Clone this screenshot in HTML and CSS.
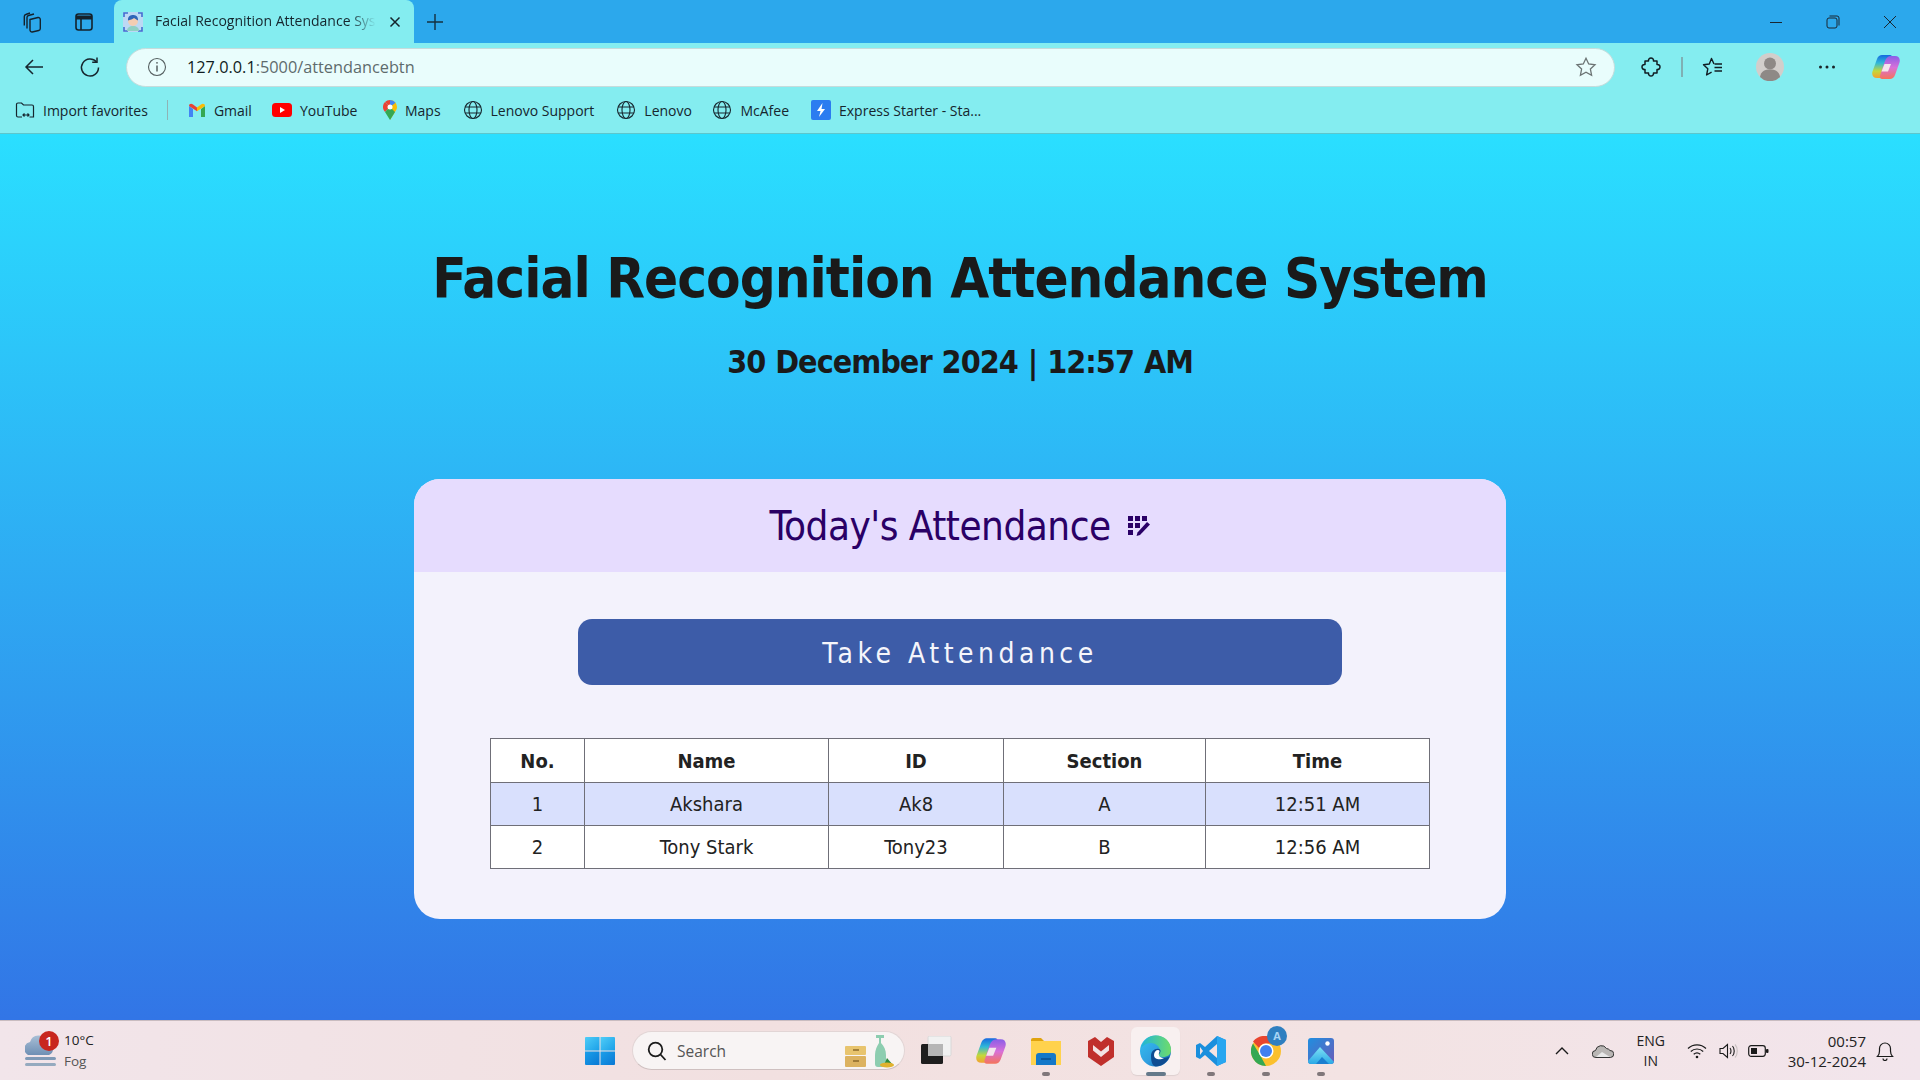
FILE: index.html
```html
<!DOCTYPE html>
<html lang="en">
<head>
<meta charset="utf-8">
<title>Facial Recognition Attendance System</title>
<link rel="stylesheet" href="styles.css">
</head>
<body>
<div class="browser">
  <header class="tabbar">
    <div class="tb-left">
      <span class="tb-btn"><svg width="24" height="24" viewBox="0 0 24 24" fill="none" stroke="#14222c" stroke-width="1.400"><path d="M10 9.500l8-2a2 2 0 0 1 2.300 2v9a2 2 0 0 1-1.600 2l-6.500 1.500a2 2 0 0 1-2.200-2z"/><path d="M7 18.500V7.500a2 2 0 0 1 1.500-2L14 4"/><path d="M4.300 15.500V6.500a2 2 0 0 1 1.500-2L10 3"/></svg></span>
      <span class="tb-btn"><svg width="22" height="22" viewBox="0 0 22 22" fill="none" stroke="#14222c" stroke-width="1.600"><rect x="3" y="3" width="16" height="16" rx="2.500"/><path d="M3 6.500h16" stroke-width="4"/><path d="M8 8v11"/></svg></span>
    </div>
    <div class="tab">
      <svg class="favicon" width="20" height="20" viewBox="0 0 20 20"><rect width="20" height="20" fill="#bcd8f4"/><path d="M1 5V1h4M15 1h4v4M1 15v4h4M19 15v4h-4" fill="none" stroke="#3f6fd0" stroke-width="1.600"/><circle cx="10" cy="9" r="5" fill="#f3cdb2"/><path d="M5 8.500C4.500 4 8 3 10 3s5.500 1 5 5.500C13 7.500 12 6.500 11 6 10 7 7 8 5 8.500z" fill="#2f66b8"/><path d="M4 19c0-3.500 2.500-5 6-5s6 1.500 6 5z" fill="#8fd0c4"/></svg>
      <span class="tab-title">Facial Recognition Attendance Sys</span>
      <svg class="tab-close" width="14" height="14" viewBox="0 0 14 14" stroke="#15252c" stroke-width="1.500"><path d="M2.500 2.500l9 9M11.500 2.500l-9 9"/></svg>
    </div>
    <svg class="tab-new" width="20" height="20" viewBox="0 0 20 20" stroke="#14303f" stroke-width="1.400"><path d="M10 2v16M2 10h16"/></svg>
    <div class="win-controls">
      <svg width="14" height="14" viewBox="0 0 14 14" stroke="#1a2630" stroke-width="1"><path d="M1 7.500h12"/></svg>
      <svg width="14" height="14" viewBox="0 0 14 14" fill="none" stroke="#1a2630" stroke-width="1"><rect x="1" y="3" width="10" height="10" rx="2"/><path d="M3.500 1H11a2 2 0 0 1 2 2v7.500"/></svg>
      <svg width="14" height="14" viewBox="0 0 14 14" stroke="#1a2630" stroke-width="1"><path d="M1 1l12 12M13 1 1 13"/></svg>
    </div>
  </header>

  <div class="toolbar">
    <span class="nav-btn nav-back"><svg width="22" height="22" viewBox="0 0 22 22" fill="none" stroke="#16262e" stroke-width="1.500"><path d="M20 11H3M10 4l-7 7 7 7"/></svg></span>
    <span class="nav-btn nav-reload"><svg width="22" height="22" viewBox="0 0 22 22" fill="none" stroke="#16262e" stroke-width="1.500"><path d="M17.500 6A8.500 8.500 0 1 0 19.500 11.500"/><path d="M18 1.500v4.800h-4.800"/></svg></span>
    <div class="address">
      <svg width="20" height="20" viewBox="0 0 20 20" fill="none" stroke="#555f60" stroke-width="1.100"><circle cx="10" cy="10" r="8.500"/><path d="M10 8.500v6" stroke-width="1.500"/><circle cx="10" cy="5.800" r=".9" fill="#555f60" stroke="none"/></svg>
      <span class="url"><span class="url-host">127.0.0.1</span>:5000/attendancebtn</span>
      <svg class="addr-star" width="22" height="22" viewBox="0 0 22 22" fill="none" stroke="#6c7474" stroke-width="1.300"><path d="M11 2.200l2.700 5.800 6.300.8-4.600 4.300 1.200 6.200L11 16.200l-5.600 3.100 1.200-6.200L2 8.800l6.300-.8z"/></svg>
    </div>
    <div class="tools">
      <svg width="22" height="22" viewBox="0 0 22 22" fill="none" stroke="#101c22" stroke-width="1.500" stroke-linejoin="round"><path d="M8.500 5c-.5-4 5.500-4 5 0h3.500v3.500c4-.5 4 5.500 0 5V17h-3.500c.5 4-5.500 4-5 0H5v-3.500c-4 .5-4-5.500 0-5V5z"/></svg>
      <span class="tool-sep"></span>
      <svg width="22" height="22" viewBox="0 0 22 22" fill="none" stroke="#101c22" stroke-width="1.400" stroke-linejoin="round"><path d="M12 8 9.500 2.500 7.300 8 1.500 8.700l4.300 4.100L4.600 19l5-2.800"/><path d="M12.500 8H20M12.500 11.500H20M12.500 15H20"/></svg>
      <span class="avatar"><svg width="28" height="28" viewBox="0 0 28 28"><circle cx="14" cy="14" r="14" fill="#d2cecb"/><circle cx="14" cy="10.500" r="6" fill="#8e8986"/><path d="M4 24c1-6 5-7.500 10-7.500S23 18 24 24a14 14 0 0 1-20 0z" fill="#8e8986"/></svg></span>
      <svg class="dots" width="18" height="6" viewBox="0 0 18 6" fill="#1a2428"><circle cx="2.500" cy="3" r="1.500"/><circle cx="9" cy="3" r="1.500"/><circle cx="15.500" cy="3" r="1.500"/></svg>
      <svg width="28" height="28" viewBox="0 0 28 28"><defs><linearGradient id="c1" x1="0" y1="0" x2="0" y2="1"><stop offset="0" stop-color="#1668e0"/><stop offset=".35" stop-color="#2fb8d8"/><stop offset=".7" stop-color="#c4d83a"/><stop offset="1" stop-color="#f4a030"/></linearGradient><linearGradient id="c2" x1="0" y1="0" x2="0" y2="1"><stop offset="0" stop-color="#8a5ee8"/><stop offset=".5" stop-color="#d870d8"/><stop offset="1" stop-color="#f5745a"/></linearGradient></defs><path d="M10 2h8c2 0 2.500 2 2 3.500L15 20c-1 3-3 5-6 5H5c-4 0-5.500-3-4.500-6.500L5 6c.8-2.500 3-4 5-4z" fill="url(#c1)"/><path d="M18 26h-8c-2 0-2.500-2-2-3.500L13 8c1-3 3-5 6-5h4c4 0 5.500 3 4.500 6.500L23 22c-.8 2.500-3 4-5 4z" fill="url(#c2)"/><path d="M12.500 11h6.500l-3 7.500H9.500z" fill="#f4e6ee"/></svg>
    </div>
  </div>

  <nav class="favbar">
    <span class="fav fav-import"><svg width="20" height="20" viewBox="0 0 20 20" fill="none" stroke="#16262e" stroke-width="1.200"><path d="M7 17H3a1.500 1.500 0 0 1-1.500-1.500v-11A1.500 1.500 0 0 1 3 3h3.500L8.500 5H17a1.500 1.500 0 0 1 1.500 1.500V17h-4"/><path d="M8 15h6M9.500 13.500 8 15l1.500 1.500M12.500 13.500 14 15l-1.500 1.500"/></svg>Import favorites</span>
    <span class="fav-sep"></span>
    <span class="fav"><svg width="18" height="14" viewBox="0 0 18 14"><path d="M1 14V3l4 3v8z" fill="#4285f4"/><path d="M13 14V6l4-3v11z" fill="#34a853"/><path d="M1 3c0-2 2-3 4-1.500L9 4.500v3.800L1 3z" fill="#ea4335"/><path d="M17 3c0-2-2-3-4-1.500L9 4.500v3.800L17 3z" fill="#fbbc04"/></svg>Gmail</span>
    <span class="fav fav-yt"><svg width="20" height="14" viewBox="0 0 20 14"><rect width="20" height="14" rx="3.500" fill="#f00"/><path d="M8 4l5 3-5 3z" fill="#fff"/></svg>YouTube</span>
    <span class="fav fav-maps"><svg width="14" height="20" viewBox="0 0 14 20"><path d="M7 0a7 7 0 0 1 7 7c0 2-1 3.500-2 5L7 20z" fill="#fbbc04"/><path d="M7 0a7 7 0 0 0-5 2.100L7 7z" fill="#ea4335"/><path d="M7 0a7 7 0 0 1 5.500 2.700L7 7z" fill="#4285f4"/><path d="M2 2.100A7 7 0 0 0 2 12l5-5z" fill="#ea4335"/><path d="M2 12l5 8 5-8-5-5z" fill="#34a853"/><circle cx="7" cy="7" r="2.500" fill="#fff"/></svg>Maps</span>
    <span class="fav"><svg class="globe" width="20" height="20" viewBox="0 0 20 20" fill="none" stroke="#16262e" stroke-width="1.100"><circle cx="10" cy="10" r="8.500"/><ellipse cx="10" cy="10" rx="4" ry="8.500"/><path d="M2 7h16M2 13h16"/></svg>Lenovo Support</span>
    <span class="fav"><svg class="globe" width="20" height="20" viewBox="0 0 20 20" fill="none" stroke="#16262e" stroke-width="1.100"><circle cx="10" cy="10" r="8.500"/><ellipse cx="10" cy="10" rx="4" ry="8.500"/><path d="M2 7h16M2 13h16"/></svg>Lenovo</span>
    <span class="fav fav-mc"><svg class="globe" width="20" height="20" viewBox="0 0 20 20" fill="none" stroke="#16262e" stroke-width="1.100"><circle cx="10" cy="10" r="8.500"/><ellipse cx="10" cy="10" rx="4" ry="8.500"/><path d="M2 7h16M2 13h16"/></svg>McAfee</span>
    <span class="fav"><svg width="20" height="20" viewBox="0 0 20 20"><rect width="20" height="20" rx="2" fill="#2b7cf0"/><path d="M11.500 3 6 11h3.500L8 17l6-8h-3.500z" fill="#fff"/></svg>Express Starter - Sta...</span>
  </nav>
</div>

<main class="page">
  <h1 class="title">Facial Recognition Attendance System</h1>
  <p class="datetime">30 December 2024 | 12:57 AM</p>
  <section class="card">
    <h2 class="card-head">Today's Attendance
      <svg class="head-icon" width="24" height="22" viewBox="0 0 24 22" fill="#2a0066"><rect x="1" y="1" width="5" height="5"/><rect x="8" y="1" width="5" height="5"/><rect x="15" y="1" width="5" height="5"/><rect x="1" y="8" width="5" height="5"/><rect x="8" y="8" width="5" height="5"/><rect x="1" y="15" width="5" height="5"/><path d="M20 7l3 2.500L13 20l-3.500 1 1-3.500z"/></svg>
    </h2>
    <div class="card-body">
      <button class="take-btn" type="button">Take Attendance</button>
      <table class="att-table">
        <thead>
          <tr><th class="c-no">No.</th><th class="c-name">Name</th><th class="c-id">ID</th><th class="c-sec">Section</th><th class="c-time">Time</th></tr>
        </thead>
        <tbody>
          <tr class="alt"><td>1</td><td>Akshara</td><td>Ak8</td><td>A</td><td>12:51 AM</td></tr>
          <tr><td>2</td><td>Tony Stark</td><td>Tony23</td><td>B</td><td>12:56 AM</td></tr>
        </tbody>
      </table>
    </div>
  </section>
</main>

<footer class="taskbar">
  <div class="weather">
    <span class="weather-icon">
      <svg width="32" height="34" viewBox="0 0 32 34"><defs><linearGradient id="cl" x1="0" y1="0" x2="0" y2="1"><stop offset="0" stop-color="#a8bfd6"/><stop offset="1" stop-color="#6f8fb4"/></linearGradient></defs><path d="M3 21a7 7 0 0 1 2-13 9 9 0 0 1 17-1 7 7 0 0 1 6 7 7 7 0 0 1-4 7z" fill="url(#cl)"/><rect x="0" y="23" width="31" height="3" rx="1.500" fill="#7f99b6"/><rect x="0" y="29" width="31" height="3" rx="1.500" fill="#95aabf"/></svg>
      <span class="badge">1</span>
    </span>
    <span class="weather-text"><span>10°C</span><span class="fog">Fog</span></span>
  </div>
  <div class="center">
    <span class="start"><svg width="30" height="30" viewBox="0 0 30 30"><defs><linearGradient id="w1" x1="0" y1="0" x2="1" y2="1"><stop offset="0" stop-color="#4fcdf7"/><stop offset="1" stop-color="#1a9fe8"/></linearGradient><linearGradient id="w2" x1="0" y1="0" x2="1" y2="1"><stop offset="0" stop-color="#1ba0ea"/><stop offset="1" stop-color="#0a78d4"/></linearGradient></defs><path d="M1 1h13.500v13.500H0V2a1 1 0 0 1 1-1z" fill="url(#w1)"/><path d="M15.500 1H29a1 1 0 0 1 1 1v12.500H15.500z" fill="url(#w1)"/><path d="M0 15.500h14.500V29H1a1 1 0 0 1-1-1z" fill="url(#w2)"/><path d="M15.500 15.500H30V28a1 1 0 0 1-1 1H15.500z" fill="url(#w2)"/></svg></span>
    <div class="search">
      <svg width="22" height="22" viewBox="0 0 22 22" fill="none" stroke="#1c1c1c" stroke-width="1.800"><circle cx="9.500" cy="9.500" r="6.800"/><path d="M14.500 14.500l5 5.500"/></svg>
      <span class="search-text">Search</span>
      <svg class="search-art" width="52" height="34" viewBox="0 0 52 34"><rect x="2" y="12" width="21" height="9" rx="1" fill="#e8c46e"/><rect x="2" y="22" width="21" height="11" rx="1" fill="#dcb260"/><path d="M10 16h6M10 27h6" stroke="#8c6a2a" stroke-width="1.500"/><path d="M33 1h8v3h-3v5c3 3 5 7 5 12v9a3 3 0 0 1-3 3h-5a3 3 0 0 1-3-3v-9c0-5 2-9 4-12V4h-3z" fill="#8dcdb0"/><path d="M44 24l6 7H41z" fill="#2e8a3c"/><ellipse cx="44" cy="31" rx="7" ry="2.500" fill="#e0b22e"/></svg>
    </div>
    <div class="apps">
      <span class="app"><svg width="32" height="30" viewBox="0 0 32 30"><rect x="8" y="0" width="23" height="20" rx="1.500" fill="#f1f1f1" stroke="#d8d8d8"/><rect x="1" y="8" width="22" height="20" rx="1.500" fill="#1e1e1e"/><rect x="8" y="8" width="15" height="12" fill="#b5b5b5"/></svg></span>
      <span class="app"><svg width="30" height="30" viewBox="0 0 28 28"><defs><linearGradient id="c3" x1="0" y1="0" x2="0" y2="1"><stop offset="0" stop-color="#1668e0"/><stop offset=".35" stop-color="#2fb8d8"/><stop offset=".7" stop-color="#c4d83a"/><stop offset="1" stop-color="#f4a030"/></linearGradient><linearGradient id="c4" x1="0" y1="0" x2="0" y2="1"><stop offset="0" stop-color="#8a5ee8"/><stop offset=".5" stop-color="#d870d8"/><stop offset="1" stop-color="#f5745a"/></linearGradient></defs><path d="M10 2h8c2 0 2.500 2 2 3.500L15 20c-1 3-3 5-6 5H5c-4 0-5.500-3-4.500-6.500L5 6c.8-2.500 3-4 5-4z" fill="url(#c3)"/><path d="M18 26h-8c-2 0-2.500-2-2-3.500L13 8c1-3 3-5 6-5h4c4 0 5.500 3 4.500 6.500L23 22c-.8 2.500-3 4-5 4z" fill="url(#c4)"/><path d="M12.500 11h6.500l-3 7.500H9.500z" fill="#f4e6ee"/></svg></span>
      <span class="app running"><svg width="30" height="28" viewBox="0 0 30 28"><path d="M0 3a2 2 0 0 1 2-2h8l3 3h-13z" fill="#e0a30e"/><path d="M0 4h30v24H0z" fill="#ffd24d"/><path d="M5 19a3 3 0 0 1 3-3h14a3 3 0 0 1 3 3v9H5z" fill="#1478c8"/><path d="M10 22h10" stroke="#0b4f8f" stroke-width="1.500"/></svg></span>
      <span class="app"><svg width="28" height="30" viewBox="0 0 28 30"><path d="M1 5l7-4 6 5 6-5 7 4v16l-13 9L1 21z" fill="#c0302c"/><path d="M6 9l8 6.500L22 9v5.500l-8 6.500-8-6.500z" fill="#f3e3e3"/></svg></span>
      <span class="app active"><svg width="32" height="32" viewBox="0 0 32 32"><defs><linearGradient id="e1" x1="0" y1="0" x2="1" y2="1"><stop offset="0" stop-color="#35c1f1"/><stop offset=".55" stop-color="#2f9fe0"/><stop offset="1" stop-color="#0c59a4"/></linearGradient><linearGradient id="e2" x1="0" y1="0" x2="1" y2="0"><stop offset="0" stop-color="#1fb5d8"/><stop offset="1" stop-color="#6fdc6a"/></linearGradient></defs><circle cx="15.500" cy="16" r="15.500" fill="url(#e1)"/><path d="M1 13C3 5 9 .5 16 .5 25 .5 31 7 31 15c0 5-4 7-8 7-3 0-5-1-5-2 1-1 2-2 2-4 0-5-5-8-9-8-4 0-8 2-10 5z" fill="url(#e2)"/><path d="M11 21c0-5 4-8 8-7 2 .5 2 3 0 5-1 2 1 4 5 4 2 0 4-1 5.500-1.500C27 28 21 31.500 16 31.500c-3 0-5-4-5-10.500z" fill="#0f4c91"/><path d="M14 20c0-3 2-5 4-5 1.500 0 2 1 1 3-1 3 2 5 5 5-3 2-10 2-10-3z" fill="#fff"/></svg><i class="ind ind-wide"></i></span>
      <span class="app running"><svg width="30" height="30" viewBox="0 0 30 30"><path d="M21 0l9 4v22l-9 4-12-11-5 4-4-2V9l4-2 5 4z" fill="#1a8fdd"/><path d="M21 0l9 4v22l-9 4z" fill="#28a6f0"/><path d="M21 8l-8 7 8 7z" fill="#f3e3e3"/><path d="M4 11l3 4-3 4z" fill="#f3e3e3"/></svg></span>
      <span class="app running"><svg class="chrome" width="30" height="30" viewBox="0 0 30 30"><circle cx="15" cy="15" r="15" fill="#fbc02d"/><path d="M15 0a15 15 0 0 1 13 7.500H15A7.500 7.500 0 0 0 8 12L2 5.500A15 15 0 0 1 15 0z" fill="#e8452f"/><path d="M2 7.500 9 19l6 11A15 15 0 0 1 2 7.500z" fill="#34a853"/><circle cx="15" cy="15" r="7.500" fill="#fff"/><circle cx="15" cy="15" r="6" fill="#3f80f0"/></svg><span class="profile">A</span></span>
      <span class="app running"><svg width="26" height="26" viewBox="0 0 26 26"><defs><linearGradient id="p1" x1="0" y1="0" x2="1" y2="1"><stop offset="0" stop-color="#1f8fe0"/><stop offset="1" stop-color="#6a5bb8"/></linearGradient><linearGradient id="p2" x1="0" y1="0" x2="0" y2="1"><stop offset="0" stop-color="#7ee2f5"/><stop offset="1" stop-color="#2aa8e6"/></linearGradient></defs><rect width="26" height="26" rx="3" fill="url(#p1)"/><path d="M0 23 12 9l14 15v-1a3 3 0 0 1-3 3H3a3 3 0 0 1-3-3z" fill="url(#p2)"/><path d="M8 26l6-7 7 7z" fill="#1b7fd0"/><circle cx="19.500" cy="5.500" r="2.200" fill="#fff"/></svg></span>
    </div>
  </div>
  <div class="tray">
    <svg class="t-chev" width="14" height="10" viewBox="0 0 14 10" fill="none" stroke="#1a1a1a" stroke-width="1.400"><path d="M1 8l6-6 6 6"/></svg>
    <svg class="t-cloud" width="22" height="14" viewBox="0 0 22 14"><path d="M4 13.500a3.500 3.500 0 0 1-.5-7 6 6 0 0 1 11-2 5 5 0 0 1 3.500 2 3.500 3.500 0 0 1 .5 7z" fill="#b9b6b4" stroke="#333" stroke-width="1"/><path d="M4 13l6-5 8 5z" fill="#e8e8e8"/></svg>
    <span class="t-lang"><span>ENG</span><span>IN</span></span>
    <svg class="t-wifi" width="20" height="16" viewBox="0 0 20 16" fill="none" stroke="#1a1a1a" stroke-width="1.200"><path d="M1 5.500a13 13 0 0 1 18 0M3.800 8.500a9 9 0 0 1 12.400 0M6.700 11.300a5 5 0 0 1 6.600 0"/><circle cx="10" cy="14" r="1.300" fill="#1a1a1a" stroke="none"/></svg>
    <svg class="t-vol" width="20" height="16" viewBox="0 0 20 16" fill="none" stroke="#1a1a1a" stroke-width="1.100"><path d="M1 5.500h3L8.500 1.500v13L4 10.500H1z"/><path d="M11 5c1.300 1.500 1.300 4.500 0 6M13.500 3c2.300 2.500 2.300 7.500 0 10"/><path d="M16 1.500c3 3 3 10 0 13" stroke="#c8c0c0"/></svg>
    <svg class="t-bat" width="21" height="14" viewBox="0 0 21 14"><rect x=".7" y="1.700" width="16.600" height="10.600" rx="2.500" fill="none" stroke="#1a1a1a" stroke-width="1.200"/><rect x="3" y="4" width="6" height="6" fill="#1a1a1a"/><rect x="18" y="5" width="2.500" height="4" rx="1" fill="#1a1a1a"/></svg>
    <span class="t-clock"><span>00:57</span><span>30-12-2024</span></span>
    <svg class="t-bell" width="18" height="20" viewBox="0 0 18 20" fill="none" stroke="#1a1a1a" stroke-width="1.200"><path d="M1.500 15.500c1.500-1.500 2-3 2-5.500V7.500a5.500 5.500 0 0 1 11 0V10c0 2.500.5 4 2 5.500z"/><path d="M7 17.500a2 2 0 0 0 4 0"/></svg>
  </div>
</footer>
</body>
</html>
```

FILE: styles.css
```css
* { box-sizing: border-box; }
html, body { height: 100%; }
body {
  margin: 0;
  width: 1920px;
  height: 1080px;
  overflow: hidden;
  display: flex;
  flex-direction: column;
  font-family: "Open Sans", "Noto Sans", sans-serif;
  color: #16262e;
}
svg { display: block; flex: none; }

/* browser chrome */
.browser { flex: none; background: #84edf0; }
.tabbar {
  height: 43px;
  background: #2ca8ec;
  display: flex;
  align-items: flex-end;
}
.tb-left { display: flex; width: 114px; height: 43px; align-items: center; padding-left: 6px; }
.tb-btn { width: 52px; display: flex; justify-content: center; }
.tab {
  width: 300px;
  height: 43px;
  background: #84edf0;
  border-radius: 8px 8px 0 0;
  display: flex;
  align-items: center;
  padding: 0 9px 0 9px;
}
.favicon { margin-right: 12px; }
.tab-title {
  flex: 1;
  min-width: 0;
  margin-bottom: 2px;
  font-size: 14px;
  color: #16262e;
  white-space: nowrap;
  -webkit-mask-image: linear-gradient(90deg, #000 88%, transparent);
  mask-image: linear-gradient(90deg, #000 88%, transparent);
}
.tab-close { margin: 0 3px 0 12px; }
.tab-new { align-self: center; margin-left: 11px; }
.win-controls {
  margin-left: auto;
  align-self: center;
  display: flex;
  gap: 43px;
  padding-right: 23px;
}

.toolbar {
  height: 45px;
  display: flex;
  align-items: center;
  padding: 3px 0 0 12px;
}
.nav-btn { display: flex; }
.nav-back { width: 55px; padding-left: 11px; }
.nav-reload { width: 59px; padding-left: 12px; }
.address {
  width: 1489px;
  height: 39px;
  background: #e9fdfc;
  border: 1.500px solid #c6dcdc;
  border-radius: 20px;
  display: flex;
  align-items: center;
  padding: 0 17px 0 20px;
}
.url {
  margin-left: 20px;
  font-size: 16.300px;
  color: #5e6b6c;
  flex: 1;
}
.url-host { color: #101c22; }
.tools {
  flex: 1;
  display: flex;
  align-items: center;
  padding-left: 25px;
}
.tool-sep { width: 2px; height: 20px; background: #7fb0b4; margin: 0 19px; }
.avatar { margin-left: 32px; }
.dots { margin-left: 34px; }
.tools > svg:last-child { margin-left: 36px; }

.favbar {
  height: 46px;
  display: flex;
  align-items: center;
  padding: 0 0 1px 15px;
  border-bottom: 1px solid #5cc6cc;
  gap: 22px;
  font-size: 14px;
}
.fav { display: flex; align-items: center; gap: 8px; white-space: nowrap; }
.fav-sep { width: 1px; height: 20px; background: #8fb3b5; margin: 0 -2px 0 -3px; }
.fav-yt { margin-left: -2px; }
.fav-maps { margin-left: 3.500px; }
.fav-mc { margin-left: -1.500px; }

/* page */
.page {
  flex: 1;
  min-height: 0;
  background: linear-gradient(180deg, #2adfff 0%, #3275e6 100%);
  display: flex;
  flex-direction: column;
  align-items: center;
  font-family: "DejaVu Sans Condensed", "DejaVu Sans", sans-serif;
  padding-top: 106px;
}
.title {
  margin: 0;
  font-size: 56px;
  line-height: 76px;
  font-weight: 700;
  letter-spacing: -1px;
  color: #1a1a1a;
}
.datetime {
  margin: 24px 0 0;
  font-size: 32px;
  line-height: 44px;
  font-weight: 700;
  letter-spacing: -1px;
  word-spacing: 1px;
  color: #1a1a1a;
}
.card {
  margin-top: 95px;
  width: 1092px;
  height: 440px;
  border-radius: 26px;
  background: #f3f2fc;
  overflow: hidden;
}
.card-head {
  margin: 0;
  height: 93px;
  background: #e6dcfe;
  color: #2a0066;
  font-size: 40px;
  font-weight: 400;
  letter-spacing: -.5px;
  display: flex;
  align-items: center;
  justify-content: center;
  gap: 16px;
}
.card-body {
  display: flex;
  flex-direction: column;
  align-items: center;
  padding-top: 47px;
}
.take-btn {
  width: 764px;
  height: 66px;
  padding: 2px 0 0;
  border: 0;
  border-radius: 14px;
  background: #3d5ca8;
  color: #f5f5fb;
  font: 400 28px "DejaVu Sans Condensed", "DejaVu Sans", sans-serif;
  letter-spacing: 4.500px;
}
.att-table {
  margin-top: 53px;
  width: 939px;
  border-collapse: collapse;
  background: #fff;
  font-size: 20px;
  color: #222;
  table-layout: fixed;
}
.att-table th, .att-table td {
  border: 1px solid #6f6f78;
  height: 43px;
  padding: 0;
  text-align: center;
  font-weight: 400;
}
.att-table th { height: 44px; font-weight: 700; }
.c-no { width: 94px; }
.c-name { width: 244px; }
.c-id { width: 175px; }
.c-sec { width: 202px; }
.c-time { width: 224px; }
.alt td { background: #d9e0fd; }

/* taskbar */
.taskbar {
  flex: none;
  height: 60px;
  background: linear-gradient(90deg, #f2e5ea, #f2e0e0 40%, #f3e3e3 70%, #f2e5ec);
  border-top: 1px solid #c9bcc0;
  display: grid;
  grid-template-columns: 585px auto 1fr;
  align-items: center;
  font-family: "Open Sans", "Noto Sans", sans-serif;
  color: #222;
}
.weather { display: flex; align-items: center; padding-left: 25px; gap: 7px; }
.weather-icon { position: relative; display: block; }
.badge {
  position: absolute;
  top: -3px;
  left: 14px;
  width: 20px;
  height: 20px;
  border-radius: 50%;
  background: #c8261e;
  color: #fff;
  font-size: 13px;
  font-weight: 600;
  line-height: 20px;
  text-align: center;
}
.weather-text { display: flex; flex-direction: column; font-size: 13.500px; line-height: 21px; }
.fog { color: #555; }
.center { display: flex; align-items: center; }
.start { width: 47px; }
.search {
  width: 273px;
  height: 39px;
  border-radius: 20px;
  background: #f8f4f4;
  border: 1px solid #e2d5d5;
  border-bottom-color: #cfc0c0;
  display: flex;
  align-items: center;
  padding: 0 9px 0 13px;
  gap: 9px;
}
.search-text { flex: 1; font-size: 15.500px; color: #555; }
.apps { display: flex; margin-left: 3px; }
.app {
  position: relative;
  width: 55px;
  height: 48px;
  display: flex;
  align-items: center;
  justify-content: center;
}
.app.running::after, .ind {
  content: "";
  position: absolute;
  bottom: -1px;
  left: 50%;
  width: 8px;
  height: 4px;
  margin-left: -4px;
  border-radius: 2px;
  background: #80777a;
}
.app.active::before {
  content: "";
  position: absolute;
  inset: 0 3px;
  border-radius: 6px;
  background: #f8f0f0;
  box-shadow: 0 1px 1px #ddd0d0;
}
.app.active svg { position: relative; }
.ind-wide { width: 20px; margin-left: -10px; background: #64798a; }
.profile {
  position: absolute;
  top: -1px;
  right: 6px;
  width: 20px;
  height: 20px;
  border-radius: 50%;
  background: #2f7fc0;
  color: #a8d4f4;
  font-size: 11px;
  font-weight: 700;
  line-height: 20px;
  text-align: center;
}
.tray { display: flex; align-items: center; justify-content: flex-end; padding-right: 26px; font-size: 14px; }
.t-chev { margin-right: 23px; }
.t-cloud { margin-right: 21.500px; }
.t-lang { display: flex; flex-direction: column; align-items: center; line-height: 20px; width: 30px; margin-right: 21.500px; }
.t-wifi { margin-right: 11.500px; }
.t-vol { margin-right: 9.500px; }
.t-bat { margin-right: 18.500px; }
.t-clock { display: flex; flex-direction: column; align-items: flex-end; font-size: 15px; line-height: 20px; margin-right: 10px; }
```
